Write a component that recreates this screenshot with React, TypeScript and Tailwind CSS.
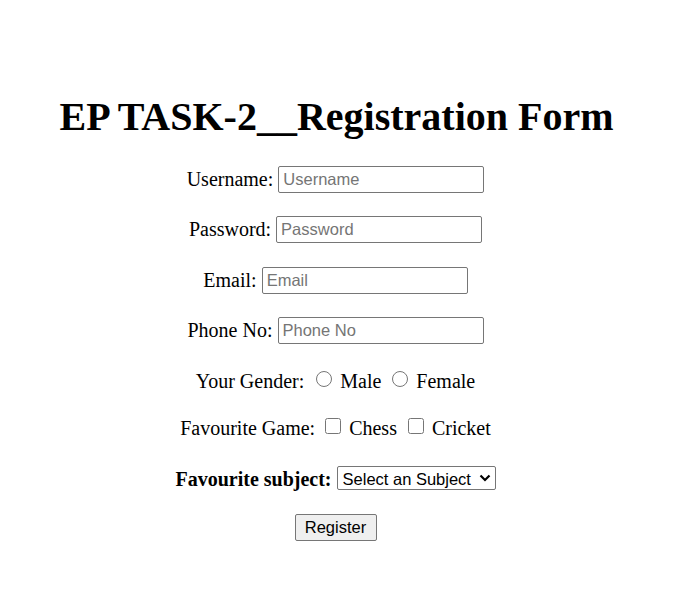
import React from 'react';

const serif = "font-['Liberation_Serif','Times_New_Roman',serif]";
const sans = "font-['Liberation_Sans',Arial,sans-serif]";

const TextRow = ({ label, mt }: { label: string; mt: string }) => (
  <div className={`flex items-center justify-center gap-[5px] h-[26px] ${mt}`}>
    <label className="text-[20px] leading-[23px]">{label}:</label>
    <input
      type="text"
      placeholder={label}
      className={`w-[206px] h-[27px] border border-[#767676] rounded-[2px] px-[4px] text-[16.5px] bg-white placeholder:text-[#757575] ${sans}`}
    />
  </div>
);

const RegistrationForm = () => {
  return (
    <div className={`min-h-[603px] bg-white text-black text-center pt-[94px] pr-[2px] ${serif}`}>
      <h1 className="text-[40px] font-bold leading-[46px] pl-[2px]">EP TASK-2__Registration Form</h1>

      <form onSubmit={(e) => e.preventDefault()} className="flex flex-col">
        <TextRow label="Username" mt="mt-[26px]" />
        <TextRow label="Password" mt="mt-[24px]" />
        <TextRow label="Email" mt="mt-[25px]" />
        <TextRow label="Phone No" mt="mt-[24px]" />

        <div className="flex items-center justify-center h-[26px] mt-[25px] text-[20px] leading-[23px]">
          <span>Your Gender:</span>
          <input type="radio" name="gender" className="w-4 h-4 ml-[12px] mr-[8px] -mt-[4px]" />
          <span>Male</span>
          <input type="radio" name="gender" className="w-4 h-4 ml-[11px] mr-[8px] -mt-[4px]" />
          <span>Female</span>
        </div>

        <div className="flex items-center justify-center h-[26px] mt-[21px] text-[20px] leading-[23px]">
          <span>Favourite Game:</span>
          <input type="checkbox" className="w-4 h-4 ml-[10px] mr-[8px] -mt-[4px]" />
          <span>Chess</span>
          <input type="checkbox" className="w-4 h-4 ml-[11px] mr-[8px] -mt-[4px]" />
          <span>Cricket</span>
        </div>

        <div className="flex items-center justify-center gap-[5px] h-[26px] mt-[25px]">
          <label className="text-[20px] leading-[23px] font-bold">Favourite subject:</label>
          <div className="relative">
            <select
              defaultValue=""
              className={`appearance-none w-[159px] h-[24px] border border-[#767676] rounded-[2px] bg-white pl-[5px] pr-[20px] text-[16.5px] ${sans}`}
            >
              <option value="" disabled>Select an Subject</option>
              <option>Maths</option>
              <option>Science</option>
              <option>English</option>
            </select>
            <svg
              className="absolute right-[5px] top-[8px] pointer-events-none"
              width="12"
              height="8"
              viewBox="0 0 12 8"
              fill="none"
            >
              <path d="M1.5 1.5 L6 6 L10.5 1.5" stroke="#000" strokeWidth="2.2" />
            </svg>
          </div>
        </div>

        <div className="flex justify-center mt-[22px]">
          <button
            type="submit"
            className={`w-[82px] h-[27px] border border-[#767676] rounded-[2px] bg-[#efefef] text-[16.5px] ${sans}`}
          >
            Register
          </button>
        </div>
      </form>
    </div>
  );
};

export default function App() {
  return <RegistrationForm />;
}
